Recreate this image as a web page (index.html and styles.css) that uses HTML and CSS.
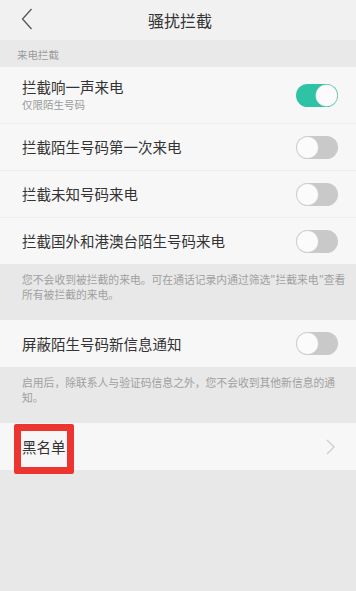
FILE: index.html
```html
<!DOCTYPE html>
<html lang="zh">
<head>
<meta charset="utf-8">
<link rel="stylesheet" href="styles.css">
</head>
<body>
<div class="page">
  <header class="topbar">
    <svg class="back" width="12" height="22" viewBox="0 0 12 22"><path d="M10.5 1 L1.5 11 L10.5 21" fill="none" stroke="#555" stroke-width="1.3"/></svg>
    <div class="title">骚扰拦截</div>
  </header>
  <div class="section-label">来电拦截</div>
  <div class="row row-tall">
    <div class="texts">
      <div class="main">拦截响一声来电</div>
      <div class="sub">仅限陌生号码</div>
    </div>
    <span class="toggle on"><span class="knob"></span></span>
  </div>
  <div class="row">
    <div class="main">拦截陌生号码第一次来电</div>
    <span class="toggle"><span class="knob"></span></span>
  </div>
  <div class="row">
    <div class="main">拦截未知号码来电</div>
    <span class="toggle"><span class="knob"></span></span>
  </div>
  <div class="row">
    <div class="main">拦截国外和港澳台陌生号码来电</div>
    <span class="toggle"><span class="knob"></span></span>
  </div>
  <div class="note">您不会收到被拦截的来电。可在通话记录内通过筛选"拦截来电"查看<br>所有被拦截的来电。</div>
  <div class="row">
    <div class="main">屏蔽陌生号码新信息通知</div>
    <span class="toggle"><span class="knob"></span></span>
  </div>
  <div class="note">启用后，除联系人与验证码信息之外，您不会收到其他新信息的通<br>知。</div>
  <div class="row row-link">
    <div class="main">黑名单</div>
    <span class="highlight"></span>
    <svg class="chev" width="9" height="16" viewBox="0 0 9 16"><path d="M1 1 L8 8 L1 15" fill="none" stroke="#cfcfcf" stroke-width="1.4"/></svg>
  </div>
</div>
</body>
</html>
```
FILE: styles.css
```css
* { box-sizing: border-box; margin: 0; padding: 0; }
html, body { width: 356px; height: 591px; overflow: hidden; }
body {
  background: #e8e8e8;
  font-family: "Noto Sans CJK SC", "Noto Sans", sans-serif;
  color: #333;
}
.page { display: flex; flex-direction: column; }
.topbar {
  height: 40px;
  background: #f1f1f1;
  display: flex;
  align-items: center;
  justify-content: center;
  position: relative;
}
.back { position: absolute; left: 21px; top: 8px; }
.title { font-size: 16px; color: #333; margin-left: 4px; }
.section-label {
  height: 27px;
  padding: 8px 0 0 17px;
  font-size: 10.5px;
  line-height: 14px;
  color: #9a9a9a;
  background: #e9e9e9;
}
.row {
  height: 47px;
  background: #f7f7f7;
  display: flex;
  align-items: center;
  justify-content: space-between;
  padding: 0 18px 0 22px;
  border-top: 1px solid #ededed;
  position: relative;
}
.section-label + .row { border-top: none; }
.note + .row { border-top: none; }
.row-tall { height: 56px; }
.main { font-size: 14.5px; line-height: 20px; color: #333; }
.texts { display: flex; flex-direction: column; margin-top: -1px; }
.sub { font-size: 10.5px; line-height: 14px; color: #9a9a9a; margin-top: 1px; }
.toggle {
  width: 42px;
  height: 23px;
  border-radius: 12px;
  background: #c9c9c9;
  position: relative;
  display: block;
}
.toggle .knob {
  position: absolute;
  left: 1px;
  top: 1px;
  width: 21px;
  height: 21px;
  border-radius: 50%;
  background: #fbfbfb;
  box-shadow: 0 0 0 0.5px #d8d8d8;
}
.toggle.on { background: #2fc3a5; }
.toggle.on .knob { left: 20px; }
.note {
  height: 56px;
  padding: 8px 10px 0 22px;
  font-size: 10.8px;
  line-height: 15px;
  color: #a0a0a0;
  background: #e8e8e8;
  white-space: nowrap;
  overflow: hidden;
}
.row-link { height: 47px; }
.highlight {
  position: absolute;
  left: 14px;
  top: 1px;
  width: 60px;
  height: 50px;
  border: 7px solid #ec3430;
  border-radius: 2px;
}
.chev { margin-right: 3px; }
```
